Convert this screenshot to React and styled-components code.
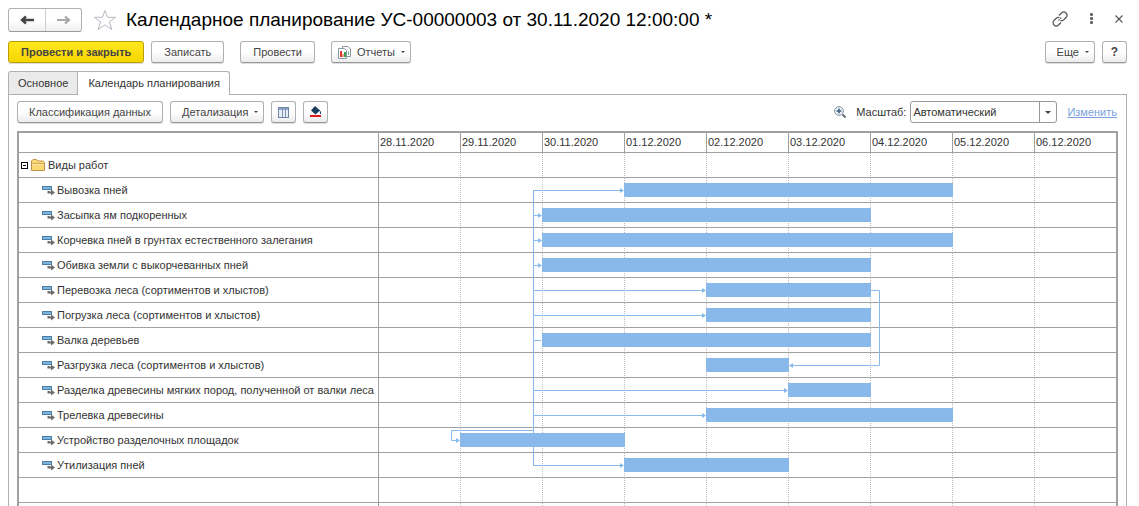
import React from 'react';
import styled, { createGlobalStyle, css } from 'styled-components';

const dates = [
    '28.11.2020',
    '29.11.2020',
    '30.11.2020',
    '01.12.2020',
    '02.12.2020',
    '03.12.2020',
    '04.12.2020',
    '05.12.2020',
    '06.12.2020',
];

// start is the index of the first day, days is the length of the bar
const works = [
    { name: 'Вывозка пней', start: 3, days: 4, link: 'arrow' },
    { name: 'Засыпка ям подкоренных', start: 2, days: 4, link: 'arrow' },
    { name: 'Корчевка пней в грунтах естественного залегания', start: 2, days: 5, link: 'arrow' },
    { name: 'Обивка земли с выкорчеванных пней', start: 2, days: 4, link: 'arrow' },
    { name: 'Перевозка леса (сортиментов и хлыстов)', start: 4, days: 2, link: 'arrow' },
    { name: 'Погрузка леса (сортиментов и хлыстов)', start: 4, days: 2, link: 'arrow' },
    { name: 'Валка деревьев', start: 2, days: 4, link: 'line' },
    { name: 'Разгрузка леса (сортиментов и хлыстов)', start: 4, days: 1 },
    { name: 'Разделка древесины мягких пород, полученной от валки леса', start: 5, days: 1, link: 'arrow' },
    { name: 'Трелевка древесины', start: 4, days: 3, link: 'arrow' },
    { name: 'Устройство разделочных площадок', start: 1, days: 2 },
    { name: 'Утилизация пней', start: 3, days: 2, link: 'arrow' },
];

const DAY = 82;
const ROW = 25;
const TRUNK = 155;

const rowMiddle = (index) => (index + 1) * ROW + 12;

const Links = () => (
    <LinksSvg viewBox={`0 0 ${DAY * 9} ${ROW * 13}`} preserveAspectRatio="none" aria-hidden="true">
        <path d={`M${TRUNK + 0.5} ${rowMiddle(0)}V${rowMiddle(11) + 1}`} />
        {works.map((work, i) => {
            if (!work.link) return null;
            const x = work.start * DAY;
            const y = rowMiddle(i);
            return (
                <g key={work.name}>
                    <path d={`M${TRUNK} ${y + 0.5}H${x - 1}`} />
                    {work.link === 'arrow' && <polygon points={`${x - 4},${y - 2} ${x},${y + 0.5} ${x - 4},${y + 3}`} />}
                </g>
            );
        })}
        <path d="M155 277.5H73.5V287.5H80" />
        <polygon points="78,285 82,287.5 78,290" />
        <path d="M492 137.5H501.5V212.5H412" />
        <polygon points="415,210 411,212.5 415,215" />
    </LinksSvg>
);

const WorkIcon = () => (
    <svg width="13" height="11" viewBox="0 0 13 11" aria-hidden="true">
        <rect x="0" y="1" width="10" height="4" fill="#4c7fa8" />
        <rect x="1" y="2" width="8" height="2" fill="#7db4dc" />
        <path d="M6.5 6V7.5H10" fill="none" stroke="#6b6b6b" strokeWidth="2" />
        <path d="M9 4.5L13 7.5L9 10.5Z" fill="#6b6b6b" />
    </svg>
);

const FolderIcon = () => (
    <svg width="14" height="12" viewBox="0 0 14 12" aria-hidden="true">
        <path d="M.5 11.5V2L2 .5H5.5L7 2H12L13.5 3.5V11.5Z" fill="#fbd876" stroke="#c2914a" />
        <path d="M1 4.5H13" stroke="#d9a959" />
        <path d="M1 5.5H13" stroke="#ffe9a3" />
    </svg>
);

const BackIcon = () => (
    <svg width="14" height="10" viewBox="0 0 14 10" aria-hidden="true">
        <path d="M14 5H3M6 1.5L2 5L6 8.5" fill="none" stroke="currentColor" strokeWidth="2.4" />
    </svg>
);

const ForwardIcon = () => (
    <svg width="14" height="10" viewBox="0 0 14 10" aria-hidden="true">
        <path d="M0 5H11M8 1.5L12 5L8 8.5" fill="none" stroke="currentColor" strokeWidth="2.2" />
    </svg>
);

const StarIcon = () => (
    <svg width="24" height="22" viewBox="0 0 24 22" aria-hidden="true">
        <path
            d="M12 1.5L14.6 8.3H22.6L16.3 13L18.9 20.5L12 15.9L5.1 20.5L7.7 13L1.4 8.3H9.4Z"
            fill="#fff"
            stroke="#b4bac1"
        />
    </svg>
);

const LinkIcon = () => (
    <svg width="16" height="16" viewBox="0 0 16 16" fill="none" stroke="#555" strokeWidth="1.2" aria-hidden="true">
        <path d="M7 4.5L9.5 2A2.9 2.9 0 0 1 14 6.5L11.5 9A3 3 0 0 1 8.5 9.5" />
        <path d="M9 11.5L6.5 14A2.9 2.9 0 0 1 2 9.5L4.5 7A3 3 0 0 1 7.5 6.5" />
        <path d="M6.5 9.5L9.5 6.5" strokeDasharray="1.5 1" />
    </svg>
);

const DotsIcon = () => (
    <svg width="3" height="12" viewBox="0 0 3 12" fill="#666" aria-hidden="true">
        <rect width="3" height="3" rx="1" />
        <rect y="4" width="3" height="3" rx="1" />
        <rect y="8" width="3" height="3" rx="1" />
    </svg>
);

const CloseIcon = () => (
    <svg width="8" height="8" viewBox="0 0 8 8" aria-hidden="true">
        <path d="M.5 .5L7.5 7.5M7.5 .5L.5 7.5" stroke="#555" strokeWidth="1.1" />
    </svg>
);

const ReportIcon = () => (
    <svg width="13" height="13" viewBox="0 0 13 13" aria-hidden="true">
        <path d="M4.5 .5H10L12.5 3V10.5H4.5Z" fill="#fff" stroke="#8b98a5" />
        <path d="M.5 2.5H6.5L8.5 4.5V12.5H.5Z" fill="#fff" stroke="#8b98a5" />
        <rect x="2" y="5" width="2" height="6" fill="#e2382c" />
        <rect x="4" y="8" width="2" height="3" fill="#f0a090" />
        <rect x="6" y="6" width="2" height="5" fill="#35a04a" />
        <path d="M10.5 5V9" stroke="#7cbf88" />
    </svg>
);

const ColumnsIcon = () => (
    <svg width="11" height="11" viewBox="0 0 11 11" aria-hidden="true">
        <rect x=".5" y=".5" width="10" height="10" fill="#e6edf5" stroke="#6d84a3" />
        <rect x="1" y="1" width="9" height="2" fill="#8fa6c4" />
        <path d="M4.5 1V10M7.5 1V10" stroke="#7d95b5" />
    </svg>
);

const FillIcon = () => (
    <svg width="12" height="12" viewBox="0 0 12 12" aria-hidden="true">
        <path d="M5 0L10 4.5L5.5 8.5L1 4.5Z" fill="#173d63" />
        <path d="M9 4Q11 5 10.5 8" fill="none" stroke="#173d63" />
        <rect y="9" width="11" height="2" fill="#e01b1b" />
    </svg>
);

const ZoomIcon = () => (
    <svg width="12" height="12" viewBox="0 0 12 12" fill="none" aria-hidden="true">
        <circle cx="5" cy="5" r="4.4" fill="#eef3f8" stroke="#8494a6" />
        <path d="M5 2.5V7.5M2.5 5H7.5" stroke="#3d5f85" strokeWidth="1.5" />
        <path d="M8.5 8.5L11.5 11.5" stroke="#66707a" strokeWidth="2" />
    </svg>
);

const App = () => (
    <>
        <GlobalStyle />
        <Page>
            <TitleBar>
                <History>
                    <HistoryButton type="button" aria-label="Назад">
                        <BackIcon />
                    </HistoryButton>
                    <HistoryButton type="button" aria-label="Вперед" $muted>
                        <ForwardIcon />
                    </HistoryButton>
                </History>
                <IconButton type="button" aria-label="Избранное">
                    <StarIcon />
                </IconButton>
                <Title>Календарное планирование УС-00000003 от 30.11.2020 12:00:00 *</Title>
                <WindowTools>
                    <IconButton type="button" aria-label="Ссылка">
                        <LinkIcon />
                    </IconButton>
                    <IconButton type="button" aria-label="Меню">
                        <DotsIcon />
                    </IconButton>
                    <IconButton type="button" aria-label="Закрыть">
                        <CloseIcon />
                    </IconButton>
                </WindowTools>
            </TitleBar>

            <Commands>
                <Button type="button" $wide $primary>Провести и закрыть</Button>
                <Button type="button" $wide>Записать</Button>
                <Spacer />
                <Button type="button" $wide>Провести</Button>
                <Spacer />
                <Button type="button" $menu $icon>
                    <ReportIcon />
                    Отчеты
                    <Caret />
                </Button>
                <Right>
                    <Button type="button" $menu>
                        Еще
                        <Caret />
                    </Button>
                    <Button type="button" $square $strong>?</Button>
                </Right>
            </Commands>

            <Tabs role="tablist">
                <Tab type="button" role="tab" aria-selected="false">Основное</Tab>
                <Tab type="button" role="tab" aria-selected="true" $active>Календарь планирования</Tab>
            </Tabs>

            <Panel>
                <PanelTools>
                    <Button type="button">Классификация данных</Button>
                    <Button type="button" $menu>
                        Детализация
                        <Caret />
                    </Button>
                    <Button type="button" $square aria-label="Колонки">
                        <ColumnsIcon />
                    </Button>
                    <Button type="button" $square aria-label="Заливка">
                        <FillIcon />
                    </Button>
                    <Scale>
                        <ZoomIcon />
                        <ScaleField>
                            <label htmlFor="scale">Масштаб:</label>
                            <SelectBox>
                                <Select id="scale" defaultValue="auto">
                                    <option value="auto">Автоматический</option>
                                </Select>
                                <SelectMark>
                                    <Caret $large />
                                </SelectMark>
                            </SelectBox>
                        </ScaleField>
                        <EditLink href="#scale">Изменить</EditLink>
                    </Scale>
                </PanelTools>

                <Gantt>
                    <Table>
                        <thead>
                            <tr>
                                <NameHead />
                                {dates.map((date) => (
                                    <DateHead key={date}>{date}</DateHead>
                                ))}
                            </tr>
                        </thead>
                        <tbody>
                            <tr>
                                <NameCell>
                                    <Group>
                                        <Toggle type="button" aria-label="Свернуть" />
                                        <FolderIcon />
                                        Виды работ
                                    </Group>
                                </NameCell>
                                {dates.map((date) => (
                                    <DayCell key={date} />
                                ))}
                            </tr>
                            {works.map((work) => (
                                <tr key={work.name}>
                                    <NameCell>
                                        <Work>
                                            <WorkIcon />
                                            {work.name}
                                        </Work>
                                    </NameCell>
                                    {dates.map((date) => (
                                        <DayCell key={date} />
                                    ))}
                                </tr>
                            ))}
                            {[1, 2].map((n) => (
                                <tr key={n}>
                                    <NameCell />
                                    {dates.map((date) => (
                                        <DayCell key={date} />
                                    ))}
                                </tr>
                            ))}
                        </tbody>
                    </Table>
                    <Chart>
                        <Links />
                        {works.map((work, i) => (
                            <Bar key={work.name} $row={i + 2} $start={work.start + 1} $days={work.days} />
                        ))}
                    </Chart>
                </Gantt>
            </Panel>
        </Page>
    </>
);

const GlobalStyle = createGlobalStyle`
    * {
        box-sizing: border-box;
    }

    body {
        margin: 0;
        height: 100vh;
        overflow: hidden;
        background: #fff;
        color: #333;
        font-family: "Liberation Sans", Arial, sans-serif;
        font-size: 11px;
    }

    button,
    select {
        font: inherit;
        color: inherit;
    }

    svg {
        display: block;
        flex: none;
    }
`;

const Page = styled.div`
    padding: 7px 12px 0 8px;
`;

const TitleBar = styled.header`
    display: flex;
    align-items: center;
    height: 25px;
`;

const History = styled.div`
    display: flex;
    height: 24px;
    border: 1px solid #b0b0b0;
    border-bottom-color: #999;
    border-radius: 3px;
    background: linear-gradient(#fff 50%, #f0f0f0);
    margin-right: 11px;
`;

const HistoryButton = styled.button`
    display: flex;
    align-items: center;
    justify-content: center;
    width: 36px;
    padding: 0;
    border: 0;
    background: none;
    color: ${({ $muted }) => ($muted ? '#a8a8a8' : '#444')};

    & + & {
        border-left: 1px solid #ccc;
    }
`;

const IconButton = styled.button`
    padding: 0;
    border: 0;
    background: none;
`;

const Title = styled.h1`
    margin: 0 0 0 9px;
    color: #000;
    font-size: 19px;
    font-weight: 400;
    white-space: nowrap;
`;

const WindowTools = styled.div`
    display: flex;
    align-items: center;
    gap: 22px;
    margin-left: auto;
    padding: 0 4px 2px 0;
`;

const Commands = styled.div`
    display: flex;
    gap: 7px;
    margin-top: 9px;
`;

const Spacer = styled.span`
    width: 2px;
`;

const Right = styled.div`
    display: flex;
    gap: 7px;
    margin-left: auto;
`;

const Button = styled.button`
    display: flex;
    align-items: center;
    justify-content: center;
    gap: 6px;
    height: 22px;
    padding: 0 ${({ $wide }) => ($wide ? 12 : 11)}px;
    border: 1px solid #b0b0b0;
    border-bottom-color: #999;
    border-radius: 3px;
    background: linear-gradient(#fff 50%, #ececec);
    box-shadow: 0 1px 0 #ddd;
    color: #444;
    white-space: nowrap;

    ${({ $menu, $icon }) => $menu && css`
        padding: 0 5px 0 ${$icon ? 6 : 11}px;
    `}

    ${({ $square }) => $square && css`
        width: 25px;
        padding: 0;
    `}

    ${({ $strong }) => $strong && css`
        font-size: 12px;
        font-weight: 700;
    `}

    ${({ $primary }) => $primary && css`
        border-color: #b9a000;
        background: linear-gradient(#ffe71f, #f7d600);
        font-weight: 700;
    `}
`;

const Caret = styled.span`
    border: ${({ $large }) => ($large ? 3 : 2)}px solid transparent;
    border-top-color: #444;
    border-bottom: 0;
`;

const Tabs = styled.div`
    display: flex;
    margin-top: 8px;
`;

const Tab = styled.button`
    height: 23px;
    padding: 0 9px 1px;
    border: 1px solid #b0b0b0;
    border-bottom: 0;
    border-radius: 3px 0 0 0;
    background: #ebebeb;

    ${({ $active }) => $active && css`
        height: 24px;
        margin: 0 0 -1px -1px;
        padding: 0 9px 2px 10px;
        border-radius: 0 3px 0 0;
        background: #fff;
    `}
`;

const Panel = styled.main`
    border: 1px solid #b0b0b0;
    border-bottom: 0;
    padding: 6px 8px 0;
`;

const PanelTools = styled.div`
    display: flex;
    align-items: center;
    gap: 7px;
    padding-right: 1px;
`;

const Scale = styled.div`
    display: flex;
    align-items: center;
    gap: 10px;
    margin-left: auto;
`;

const ScaleField = styled.div`
    display: flex;
    align-items: center;
    gap: 4px;
`;

const SelectBox = styled.div`
    position: relative;
    width: 147px;
`;

const Select = styled.select`
    display: block;
    width: 100%;
    height: 22px;
    padding: 0 24px 0 2px;
    border: 1px solid #999;
    border-radius: 3px;
    background: #fff;
    appearance: none;
`;

const SelectMark = styled.span`
    position: absolute;
    top: 1px;
    right: 1px;
    bottom: 1px;
    display: flex;
    align-items: center;
    justify-content: center;
    width: 17px;
    border-left: 1px solid #999;
    pointer-events: none;
`;

const EditLink = styled.a`
    color: #7a9fdc;
`;

const Gantt = styled.div`
    position: relative;
    overflow: hidden;
    margin-top: 8px;
    border: 2px solid #a0a0a0;
    border-bottom: 0;
`;

const Table = styled.table`
    width: calc(100% + 1px);
    table-layout: fixed;
    border-collapse: separate;
    border-spacing: 0;
`;

const NameHead = styled.td`
    width: 360px;
    height: 20px;
    padding: 0;
    border: solid #a0a0a0;
    border-width: 0 1px 1px 0;
`;

const DateHead = styled.th`
    height: 20px;
    padding: 0 1px 2px;
    border: solid #a0a0a0;
    border-width: 0 1px 1px 0;
    font-weight: 400;
    text-align: left;
`;

const NameCell = styled.td`
    height: 25px;
    padding: 0;
    border: solid #a0a0a0;
    border-width: 0 1px 1px 0;
    white-space: nowrap;
`;

const DayCell = styled.td`
    height: 25px;
    padding: 0;
    border-right: 1px dotted #bbb;
    border-bottom: 1px solid #a0a0a0;
`;

const Group = styled.div`
    display: flex;
    align-items: center;
    gap: 3px;
    padding-left: 2px;
`;

const Toggle = styled.button`
    display: flex;
    align-items: center;
    justify-content: center;
    width: 7px;
    height: 7px;
    padding: 0;
    border: 1px solid #000;
    background: #fff;

    &::before {
        content: "";
        width: 3px;
        height: 1px;
        background: #000;
    }
`;

const Work = styled.div`
    display: flex;
    align-items: center;
    gap: 2px;
    padding-left: 23px;
`;

const Chart = styled.div`
    position: absolute;
    top: 20px;
    right: 0;
    left: 359px;
    display: grid;
    grid-template-columns: repeat(9, 1fr);
    grid-template-rows: repeat(13, 25px);
`;

const Bar = styled.div`
    position: relative;
    grid-row: ${({ $row }) => $row};
    grid-column: ${({ $start, $days }) => `${$start} / span ${$days}`};
    height: 14px;
    margin: 5px -1px 0 0;
    background: #89b9eb;
`;

const LinksSvg = styled.svg`
    position: absolute;
    width: 100%;
    height: 100%;

    path {
        fill: none;
        stroke: #89b9eb;
    }

    polygon {
        fill: #89b9eb;
    }
`;

export default App;
